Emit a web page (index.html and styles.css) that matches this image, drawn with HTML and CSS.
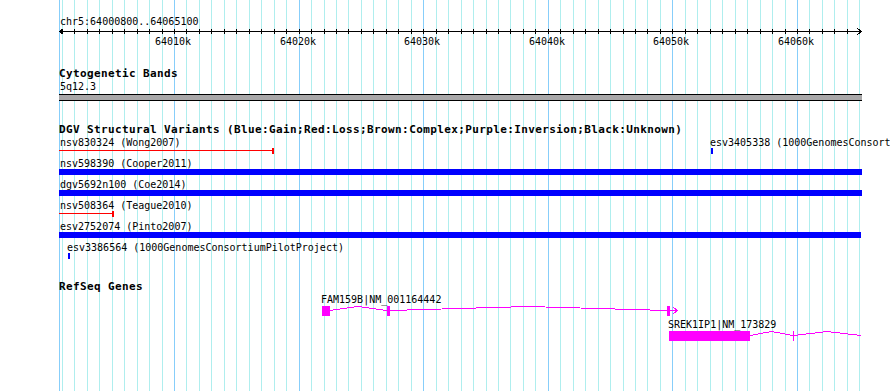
FILE: index.html
```html
<!DOCTYPE html>
<html lang="en">
<head>
    <meta charset="UTF-8">
    <title>chr5:64000800..64065100</title>
    <link rel="stylesheet" href="styles.css">
</head>
<body>
    <div class="panel">
        <svg class="grid" id="grid" width="890" height="391" shape-rendering="crispEdges"></svg>

        <div class="ruler">
            <div class="chrom">chr5:64000800..64065100</div>
            <svg class="scale" id="scale" width="890" height="7" shape-rendering="crispEdges">
                <rect x="59" y="3" width="802" height="1" fill="#000"/>
                <polyline points="63.5,0.5 59.5,3.5 63.5,6.5" fill="none" stroke="#000"/>
                <polyline points="857.5,0.5 861.5,3.5 857.5,6.5" fill="none" stroke="#000"/>
            </svg>
            <div class="tick-labels">
                <span class="tick-label" style="left:155px">64010k</span>
                <span class="tick-label" style="left:280px">64020k</span>
                <span class="tick-label" style="left:404px">64030k</span>
                <span class="tick-label" style="left:529px">64040k</span>
                <span class="tick-label" style="left:653px">64050k</span>
                <span class="tick-label" style="left:778px">64060k</span>
            </div>
        </div>

        <div class="track cyto">
            <div class="track-title">Cytogenetic Bands</div>
            <div class="band-name">5q12.3</div>
            <div class="band"></div>
        </div>

        <div class="track dgv">
            <div class="track-title">DGV Structural Variants (Blue:Gain;Red:Loss;Brown:Complex;Purple:Inversion;Black:Unknown)</div>
            <div class="row">
                <span class="feat-label" style="left:60px">nsv830324 (Wong2007)</span>
                <div class="glyph loss" style="left:59px;width:215px"></div>
                <span class="feat-label" style="left:710px">esv3405338 (1000GenomesConsortiumPilotProject)</span>
                <div class="glyph gain" style="left:711px;width:2px"></div>
            </div>
            <div class="row">
                <span class="feat-label" style="left:60px">nsv598390 (Cooper2011)</span>
                <div class="glyph gain" style="left:59px;width:803px"></div>
            </div>
            <div class="row">
                <span class="feat-label" style="left:60px">dgv5692n100 (Coe2014)</span>
                <div class="glyph gain" style="left:59px;width:803px"></div>
            </div>
            <div class="row">
                <span class="feat-label" style="left:60px">nsv508364 (Teague2010)</span>
                <div class="glyph loss" style="left:59px;width:55px"></div>
            </div>
            <div class="row">
                <span class="feat-label" style="left:60px">esv2752074 (Pinto2007)</span>
                <div class="glyph gain" style="left:59px;width:802px"></div>
            </div>
            <div class="row">
                <span class="feat-label" style="left:67px">esv3386564 (1000GenomesConsortiumPilotProject)</span>
                <div class="glyph gain" style="left:68px;width:2px"></div>
            </div>
        </div>

        <div class="track refseq">
            <div class="track-title">RefSeq Genes</div>
            <div class="gene-row">
                <span class="feat-label" style="left:321px">FAM159B|NM_001164442</span>
                <svg class="gene" width="890" height="10" shape-rendering="crispEdges">
                    <rect x="322" y="0" width="8" height="10"/>
                    <polyline points="330,4.5 358,0.5 387,4.5"/>
                    <rect x="387" y="0" width="3" height="10"/>
                    <polyline points="390,4.5 528,0.5 667,4.5"/>
                    <rect x="667" y="0" width="3" height="10"/>
                    <polyline points="670,4.5 677,4.5"/>
                    <polyline points="673.5,1.5 677.5,4.5 673.5,7.5"/>
                </svg>
            </div>
            <div class="gene-row">
                <span class="feat-label" style="left:668px">SREK1IP1|NM_173829</span>
                <svg class="gene" width="890" height="10" shape-rendering="crispEdges">
                    <rect x="669" y="0" width="81" height="10"/>
                    <polyline points="750,4.5 771.5,0.5 793,4.5"/>
                    <rect x="793" y="0" width="1" height="10"/>
                    <polyline points="794,4.5 827,0.5 861,4.5"/>
                </svg>
            </div>
        </div>
    </div>

    <script>
        const SVG_NS = 'http://www.w3.org/2000/svg';

        // pixel column of a genome position (10k = 124.6px)
        function column(pos) {
            return Math.floor(174.5 + (pos - 64010000) * 0.01246);
        }

        function addRect(svg, x, y, w, h, fill) {
            const r = document.createElementNS(SVG_NS, 'rect');
            r.setAttribute('x', x);
            r.setAttribute('y', y);
            r.setAttribute('width', w);
            r.setAttribute('height', h);
            r.setAttribute('fill', fill);
            svg.appendChild(r);
        }

        const grid = document.getElementById('grid');
        const scale = document.getElementById('scale');

        addRect(grid, 59, 0, 1, 391, '#87cefa');
        for (let pos = 64001000; pos <= 64065000; pos += 1000) {
            const x = column(pos);
            const major = pos % 10000 === 0;
            addRect(grid, x, 0, 1, 391, major ? '#87cefa' : '#afeeee');
            addRect(scale, x, 1, 1, 5, '#000');
        }
    </script>
</body>
</html>
```

FILE: styles.css
```css
body {
    margin: 0;
    background-color: white;
    font-family: "DejaVu Sans Mono", "Liberation Mono", monospace;
    font-size: 10px;
    color: black;
}
.panel {
    position: relative;
    width: 890px;
    height: 391px;
    overflow: hidden;
}
.grid {
    position: absolute;
    left: 0;
    top: 0;
}
.ruler,
.track {
    position: relative;
}
.ruler {
    padding-top: 15px;
}
.chrom {
    padding-left: 60px;
    line-height: 13px;
}
.scale {
    display: block;
}
.tick-labels {
    position: relative;
    height: 13px;
    line-height: 13px;
}
.tick-label {
    position: absolute;
    top: 0;
}
.track-title {
    padding-left: 59px;
    font-size: 11px;
    font-weight: bold;
    letter-spacing: 0.38px;
    line-height: 13px;
    white-space: nowrap;
}
.cyto {
    margin-top: 20px;
}
.cyto .track-title {
    line-height: 12px;
}
.band-name {
    padding-left: 60px;
    line-height: 13px;
}
.band {
    margin: 1px 0 0 59px;
    width: 803px;
    height: 5px;
    border-top: 1px solid black;
    border-bottom: 1px solid black;
    background-color: #a9a8a9;
}
.dgv {
    margin-top: 22px;
}
.row {
    position: relative;
    height: 21px;
}
.feat-label {
    position: absolute;
    top: 0;
    line-height: 13px;
    white-space: nowrap;
}
.glyph {
    position: absolute;
    top: 12px;
    height: 6px;
}
.gain {
    background-color: #0000ff;
}
.loss::before {
    content: "";
    position: absolute;
    left: 0;
    right: 0;
    top: 2px;
    height: 1px;
    background-color: #ff0000;
}
.loss::after {
    content: "";
    position: absolute;
    right: 0;
    top: 0;
    width: 2px;
    height: 6px;
    background-color: #ff0000;
}
.refseq {
    margin-top: 18px;
}
.gene-row {
    position: relative;
    height: 25px;
}
.gene {
    position: absolute;
    left: 0;
    top: 13px;
}
.gene rect {
    fill: #ff00ff;
}
.gene polyline {
    fill: none;
    stroke: #ff00ff;
    stroke-width: 1;
}
```
